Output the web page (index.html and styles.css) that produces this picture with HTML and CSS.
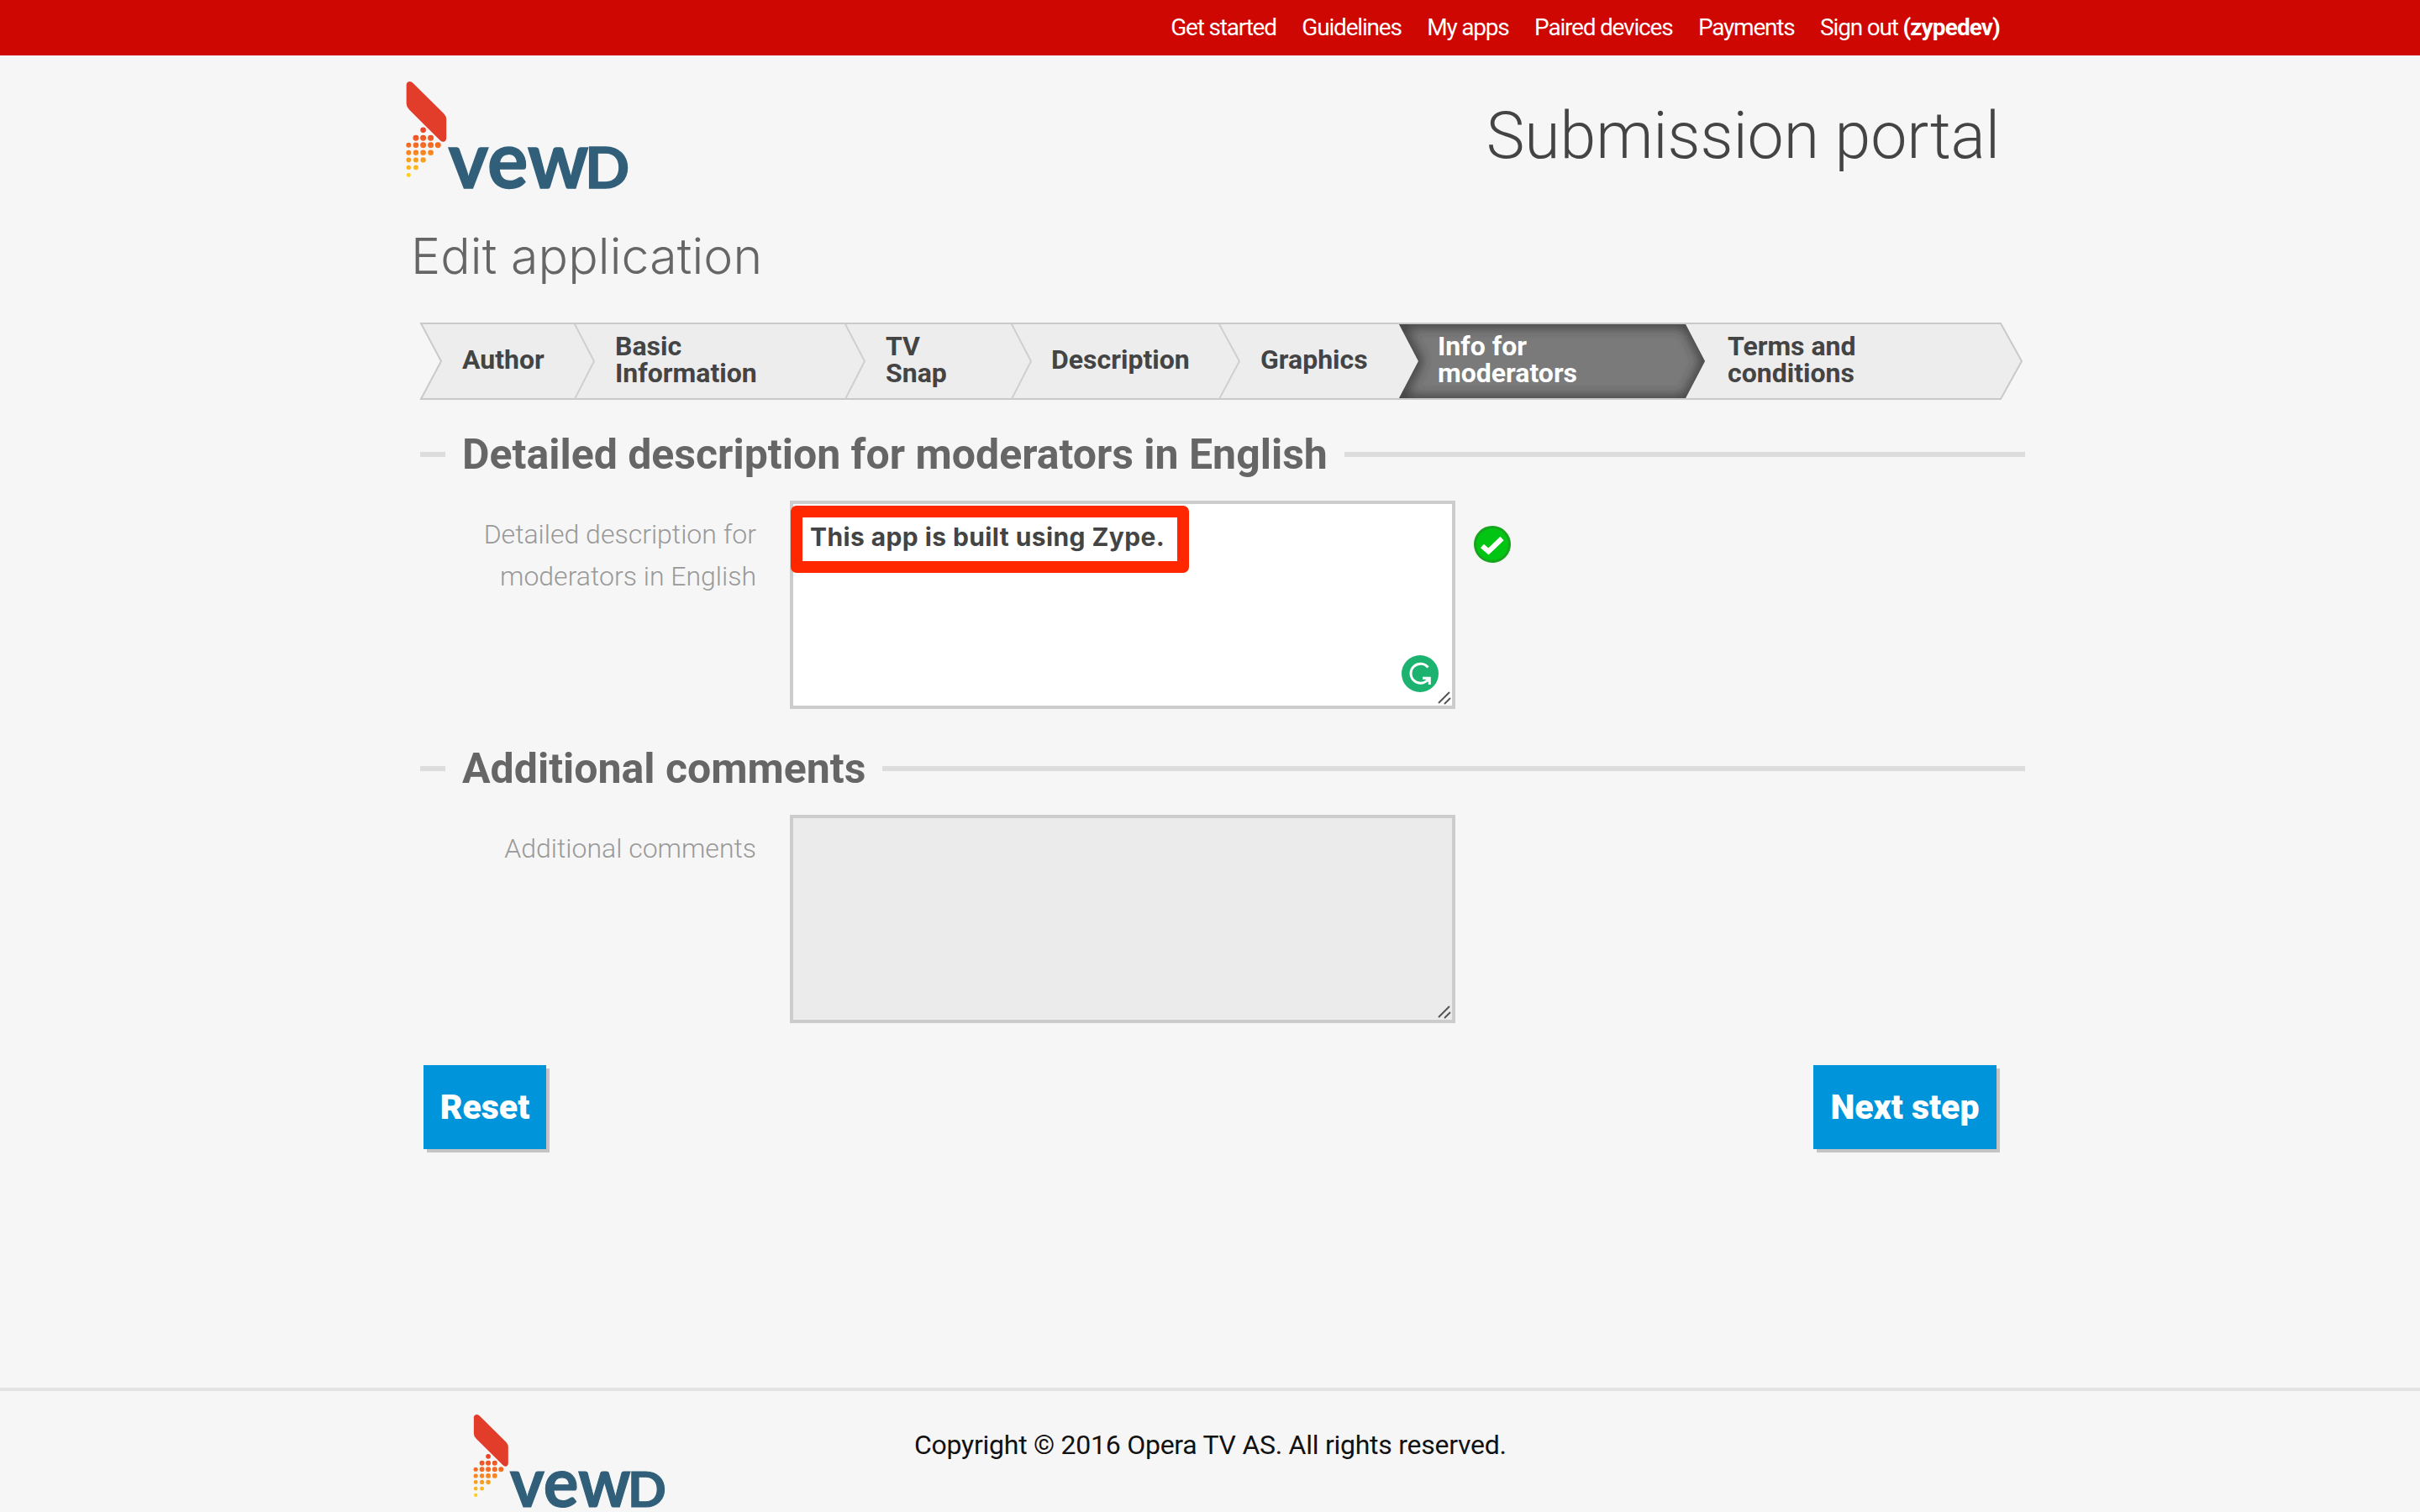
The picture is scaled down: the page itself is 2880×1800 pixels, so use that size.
FILE: index.html
```html
<!DOCTYPE html>
<html lang="en">
<head>
    <meta charset="UTF-8">
    <title>Submission portal - Edit application</title>
    <link rel="stylesheet" href="styles.css">
</head>
<body>

<!-- logo mark, used in the header and the footer -->
<svg class="defs" width="0" height="0">
    <linearGradient id="dots" gradientUnits="userSpaceOnUse" x1="0" y1="275" x2="0" y2="452">
        <stop offset="0" stop-color="#e93e2b"/>
        <stop offset="0.35" stop-color="#f26a25"/>
        <stop offset="0.6" stop-color="#f99420"/>
        <stop offset="1" stop-color="#ffd21c"/>
    </linearGradient>
    <g id="mark">
        <path fill="#e23d2b" d="M70 122Q72 111 82 111Q88 111 93 116L204 226Q213 236 213 246V314Q212 326 202 327Q196 327 191 322L80 212Q70 202 70 190Z"/>
        <g fill="url(#dots)">
            <circle cx="130" cy="285" r="10"/>
            <circle cx="104" cy="313" r="10.5"/><circle cx="130" cy="313" r="10.5"/><circle cx="157" cy="313" r="10.5"/>
            <circle cx="78" cy="339" r="9"/><circle cx="104" cy="339" r="10"/><circle cx="130" cy="339" r="10.5"/><circle cx="157" cy="339" r="10.5"/><circle cx="183" cy="339" r="10.5"/>
            <circle cx="78" cy="366" r="9"/><circle cx="104" cy="366" r="9.5"/><circle cx="130" cy="366" r="10"/><circle cx="157" cy="366" r="10"/>
            <circle cx="78" cy="392" r="8.5"/><circle cx="104" cy="392" r="9"/><circle cx="130" cy="392" r="9.5"/>
            <circle cx="78" cy="419" r="8"/><circle cx="104" cy="419" r="8.5"/>
            <circle cx="78" cy="446" r="7.5"/>
        </g>
    </g>
</svg>

<div class="topbar">
    <ul class="menu">
        <li>Get started</li>
        <li>Guidelines</li>
        <li>My apps</li>
        <li>Paired devices</li>
        <li>Payments</li>
        <li>Sign out <b>(zypedev)</b></li>
    </ul>
</div>

<div class="container">
    <header class="header">
        <svg class="logo" width="270" height="133" viewBox="60 105 810 400">
            <use href="#mark"/>
            <text x="220" y="494" textLength="502" lengthAdjust="spacingAndGlyphs">vew</text>
            <text class="logo-d" x="709" y="494" textLength="160" lengthAdjust="spacingAndGlyphs">D</text>
        </svg>
        <div class="portal">Submission portal</div>
    </header>

    <h1>Edit application</h1>

    <div class="steps">
        <svg class="steps-bg" width="1912" height="94" viewBox="499 383 1912 94">
            <defs>
                <filter id="blur"><feGaussianBlur stdDeviation="7"/></filter>
                <clipPath id="current"><path d="M1665 386H2006L2029 430L2006 474H1665L1688 430Z"/></clipPath>
            </defs>
            <path class="bar" d="M501 385H2381L2406 430L2381 475H501L525 430Z"/>
            <path class="sep" d="M684 386L707 430L684 475M1006 386L1029 430L1006 475M1204 386L1227 430L1204 475M1451 386L1475 430L1451 475"/>
            <path fill="#7a7a7a" d="M1665 386H2006L2029 430L2006 474H1665L1688 430Z"/>
            <g clip-path="url(#current)">
                <path class="inner-shadow" filter="url(#blur)" d="M1663 384H2007L2031 430L2007 477H1663L1687 430Z"/>
            </g>
        </svg>
        <ol class="step-list">
            <li class="s1">Author</li>
            <li class="s2">Basic<br>Information</li>
            <li class="s3">TV<br>Snap</li>
            <li class="s4">Description</li>
            <li class="s5">Graphics</li>
            <li class="s6 active">Info for<br>moderators</li>
            <li class="s7">Terms and<br>conditions</li>
        </ol>
    </div>

    <div class="section">
        <h2>Detailed description for moderators in English</h2>
        <div class="row">
            <label>Detailed description for<br>moderators in English</label>
            <div class="field">
                <div class="highlight">This app is built using Zype.</div>
                <svg class="grammarly" width="44" height="44" viewBox="0 0 44 44">
                    <circle cx="22" cy="22" r="22" fill="#1cb26f"/>
                    <path d="M31.5 14.5A11.5 11.5 0 1 0 31 29.5M25 27.2H33.3V35" fill="none" stroke="#fff" stroke-width="3"/>
                    <path d="M27 27H33V33Z" fill="#fff"/>
                </svg>
                <svg class="grip" width="16" height="16" viewBox="0 0 16 16"><path d="M1 14L14 1M8 15L15 8"/></svg>
            </div>
            <svg class="ok" width="44" height="44" viewBox="0 0 44 44">
                <circle cx="22" cy="22" r="20.5" fill="#02c413" stroke="#17a51d" stroke-width="3"/>
                <path d="M10 24L17.5 30.5L33.5 15" fill="none" stroke="#fff" stroke-width="6"/>
            </svg>
        </div>
    </div>

    <div class="section">
        <h2>Additional comments</h2>
        <div class="row">
            <label>Additional comments</label>
            <div class="field empty">
                <svg class="grip" width="16" height="16" viewBox="0 0 16 16"><path d="M1 14L14 1M8 15L15 8"/></svg>
            </div>
        </div>
    </div>

    <div class="buttons">
        <button class="reset">Reset</button>
        <button class="next">Next step</button>
    </div>
</div>

<footer>
    <svg class="logo" width="232" height="115" viewBox="60 105 810 400">
        <use href="#mark"/>
        <text x="220" y="494" textLength="502" lengthAdjust="spacingAndGlyphs">vew</text>
        <text class="logo-d" x="709" y="494" textLength="160" lengthAdjust="spacingAndGlyphs">D</text>
    </svg>
    <p>Copyright © 2016 Opera TV AS. All rights reserved.</p>
</footer>

</body>
</html>
```
FILE: styles.css
```css
* {
    box-sizing: border-box;
}
body {
    margin: 0;
    height: 1800px;
    overflow: hidden;
    background-color: #f6f6f6;
    font-family: Roboto, sans-serif;
    color: #444;
    display: flex;
    flex-direction: column;
}
.defs {
    position: absolute;
}
.topbar {
    height: 66px;
    background-color: #cf0703;
    flex: none;
}
.menu {
    width: 1880px;
    margin: 0 auto;
    padding: 0;
    height: 66px;
    list-style: none;
    display: flex;
    justify-content: flex-end;
    gap: 30.5px;
    font-size: 28px;
    line-height: 66px;
    letter-spacing: -1.2px;
    color: #fff;
    white-space: nowrap;
}
.menu b {
    letter-spacing: -0.9px;
}
.container {
    width: 1932px;
    margin-left: 480px;
    flex: 1;
}
.header {
    height: 187px;
    padding: 29px 32px 0 0;
    display: flex;
    justify-content: space-between;
}
.logo {
    font-family: Lato, sans-serif;
    font-weight: bold;
    font-size: 284px;
    fill: #315f7a;
}
.logo text {
    stroke: #315f7a;
    stroke-width: 4;
}
.logo-d {
    font-size: 202px;
}
.portal {
    font-size: 77px;
    font-weight: 300;
    line-height: 92px;
    letter-spacing: -0.1px;
    padding-top: 21px;
    color: #444;
}
h1 {
    margin: 0 0 0 9px;
    height: 130px;
    padding-top: 16px;
    font-family: Inter, sans-serif;
    font-size: 59px;
    font-weight: 300;
    line-height: 72px;
    letter-spacing: 0.1px;
    color: #666;
}
.steps {
    position: relative;
    height: 94px;
    margin-left: 19px;
}
.steps-bg {
    position: absolute;
    left: 0;
    top: 0;
}
.bar {
    fill: #ededed;
    stroke: #c9c9c9;
    stroke-width: 2;
}
.sep {
    fill: none;
    stroke: #cfcfcf;
    stroke-width: 2;
}
.inner-shadow {
    fill: none;
    stroke: #333;
    stroke-width: 10;
}
.step-list {
    position: relative;
    margin: 0;
    padding: 0 0 4px 51px;
    height: 94px;
    list-style: none;
    display: flex;
    align-items: center;
    font-size: 32px;
    font-weight: bold;
    line-height: 32px;
    white-space: nowrap;
}
.s1 { width: 182px; }
.s2 { width: 322px; }
.s3 { width: 197px; }
.s4 { width: 249px; }
.s5 { width: 211px; }
.s6 { width: 345px; }
.active {
    color: #fff;
}
.section {
    height: 374px;
    padding: 28px 2px 0 20px;
}
h2 {
    margin: 0;
    height: 72px;
    display: flex;
    align-items: center;
    gap: 20px;
    font-size: 50px;
    line-height: 72px;
    color: #666;
    white-space: nowrap;
}
h2::before,
h2::after {
    content: "";
    height: 6px;
    background-color: #ddd;
    width: 30px;
}
h2::after {
    flex: 1;
}
.row {
    display: flex;
    margin-top: 19px;
}
label {
    width: 400px;
    margin-right: 40px;
    padding-top: 15px;
    text-align: right;
    font-size: 32px;
    font-weight: 300;
    line-height: 50px;
    color: #999;
}
.field {
    position: relative;
    width: 792px;
    height: 248px;
    border: 4px solid #ccc;
    background-color: #fff;
}
.empty {
    background-color: #ebebeb;
}
.highlight {
    width: 474px;
    height: 80px;
    margin: 2px 0 0 -3px;
    padding-left: 9px;
    border: 14px solid #ff2700;
    border-radius: 7px;
    font-family: Inter, sans-serif;
    font-size: 30px;
    font-weight: bold;
    line-height: 46px;
    letter-spacing: 0.4px;
    white-space: nowrap;
}
.grammarly {
    position: absolute;
    right: 16px;
    bottom: 16px;
}
.grip {
    position: absolute;
    right: 1px;
    bottom: 1px;
    stroke: #555;
    stroke-width: 2;
}
.ok {
    margin: 30px 0 0 22px;
}
.buttons {
    display: flex;
    justify-content: space-between;
    padding: 43px 36px 0 24px;
}
button {
    height: 100px;
    padding: 0;
    border: none;
    background-color: #0095da;
    box-shadow: 4px 4px 0 #c5c4c5;
    color: #fff;
    font-family: Roboto, sans-serif;
    font-size: 41px;
    font-weight: 900;
}
.reset {
    width: 146px;
}
.next {
    width: 218px;
}
footer {
    height: 148px;
    flex: none;
    padding: 26px 0 0 561px;
    border-top: 4px solid #e3e3e3;
    display: flex;
}
footer p {
    margin: 14px 0 0 295px;
    font-size: 32px;
    line-height: 49px;
    letter-spacing: -0.26px;
    color: #111;
}
```
